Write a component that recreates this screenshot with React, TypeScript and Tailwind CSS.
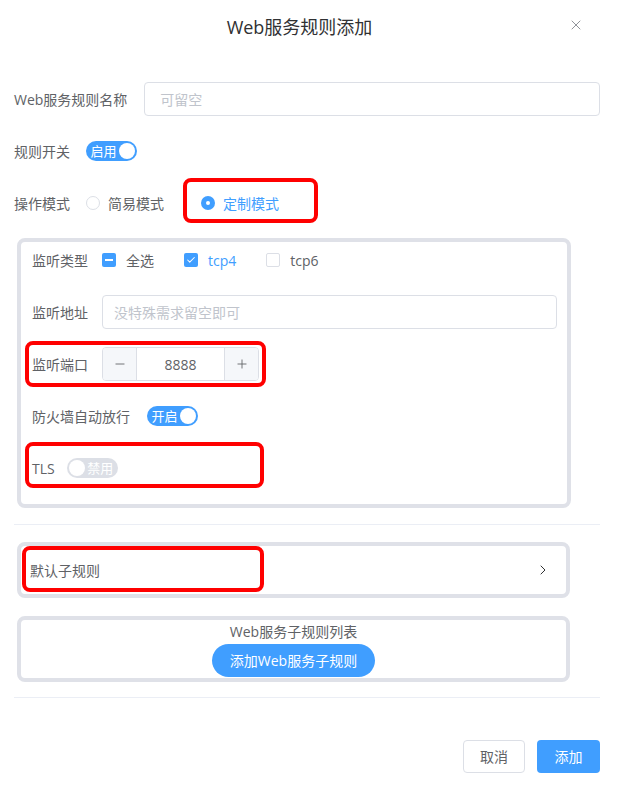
import { ChevronRight, X, Check, Minus, Plus } from 'lucide-react';

const label = 'mr-[14px] shrink-0 text-[14px] text-[#606266]';

function Switch({ on, text }: { on: boolean; text: string }) {
    return (
        <span
            className={`flex h-[20px] w-[51px] items-center rounded-full p-[2px] ${
                on ? 'bg-[#409eff]' : 'flex-row-reverse bg-[#dcdfe6]'
            }`}
        >
            <span className="flex-1 text-center text-[13px] leading-none text-white">{text}</span>
            <span className="h-[16px] w-[16px] rounded-full bg-white" />
        </span>
    );
}

function Radio({ checked, text }: { checked: boolean; text: string }) {
    return (
        <span className="flex items-center gap-[8px]">
            {checked ? (
                <span className="flex h-[14px] w-[14px] items-center justify-center rounded-full bg-[#409eff]">
                    <span className="h-[4px] w-[4px] rounded-full bg-white" />
                </span>
            ) : (
                <span className="h-[14px] w-[14px] rounded-full border border-[#dcdfe6] bg-white" />
            )}
            <span className={`text-[14px] ${checked ? 'text-[#409eff]' : 'text-[#606266]'}`}>{text}</span>
        </span>
    );
}

function CheckBox({ state, text }: { state: 'on' | 'half' | 'off'; text: string }) {
    return (
        <span className="mr-[30px] flex items-center gap-[10px]">
            {state === 'off' ? (
                <span className="h-[14px] w-[14px] rounded-[2px] border border-[#dcdfe6] bg-white" />
            ) : (
                <span className="flex h-[14px] w-[14px] items-center justify-center rounded-[2px] bg-[#409eff]">
                    {state === 'on' ? (
                        <Check size={10} strokeWidth={2.5} color="#fff" />
                    ) : (
                        <span className="h-[2px] w-[8px] bg-white" />
                    )}
                </span>
            )}
            <span className={`text-[14px] ${state === 'on' ? 'text-[#409eff]' : 'text-[#606266]'}`}>{text}</span>
        </span>
    );
}

function Annot({ cls }: { cls: string }) {
    return <div className={`pointer-events-none absolute rounded-[8px] border-[4px] border-[#ff0000] ${cls}`} />;
}

export default function App() {
    return (
        <div className="relative h-[785px] w-[619px] overflow-hidden bg-white pl-[14px] pr-[19px] font-['Open_Sans','Noto_Sans_CJK_SC',sans-serif]">
            <header className="relative -ml-[14px] -mr-[19px] flex h-[54px] items-center justify-center pr-[20px]">
                <h1 className="text-[18px] text-[#303133]">Web服务规则添加</h1>
                <X size={16} strokeWidth={1.5} color="#909399" className="absolute right-[35px] top-[17px]" />
            </header>

            <div className="mt-[28px] flex h-[34px] items-center">
                <span className="mr-[17px] shrink-0 text-[14px] text-[#606266]">Web服务规则名称</span>
                <div className="flex h-[34px] flex-1 items-center rounded-[4px] border border-[#dcdfe6] px-[15px] text-[14px] text-[#c0c4cc]">
                    可留空
                </div>
            </div>

            <div className="mt-[18px] flex h-[34px] items-center">
                <span className="mr-[16px] shrink-0 text-[14px] text-[#606266]">规则开关</span>
                <Switch on text="启用" />
            </div>

            <div className="mt-[18px] flex h-[34px] items-center">
                <span className="mr-[16px] shrink-0 text-[14px] text-[#606266]">操作模式</span>
                <div className="flex items-center gap-[37px]">
                    <Radio checked={false} text="简易模式" />
                    <Radio checked text="定制模式" />
                </div>
            </div>

            <section className="ml-[3px] mt-[18px] w-[554px] rounded-[8px] border-[4px] border-[#dfe1e8] pb-[19px] pl-[11px] pr-[10px] pt-[1px]">
                <div className="flex flex-col gap-[18px]">
                    <div className="flex h-[34px] items-center">
                        <span className={label}>监听类型</span>
                        <CheckBox state="half" text="全选" />
                        <CheckBox state="on" text="tcp4" />
                        <CheckBox state="off" text="tcp6" />
                    </div>
                    <div className="flex h-[34px] items-center">
                        <span className={label}>监听地址</span>
                        <div className="flex h-[34px] flex-1 items-center rounded-[4px] border border-[#dcdfe6] px-[11px] text-[14px] text-[#c0c4cc]">
                            没特殊需求留空即可
                        </div>
                    </div>
                    <div className="flex h-[34px] items-center">
                        <span className={label}>监听端口</span>
                        <div className="flex h-[34px] w-[157px] overflow-hidden rounded-[4px] border border-[#dcdfe6]">
                            <span className="flex w-[34px] items-center justify-center border-r border-[#dcdfe6] bg-[#f5f7fa]">
                                <Minus size={14} strokeWidth={1.5} color="#606266" />
                            </span>
                            <span className="flex flex-1 items-center justify-center text-[14px] text-[#606266]">8888</span>
                            <span className="flex w-[34px] items-center justify-center border-l border-[#dcdfe6] bg-[#f5f7fa]">
                                <Plus size={14} strokeWidth={1.5} color="#606266" />
                            </span>
                        </div>
                    </div>
                    <div className="flex h-[34px] items-center">
                        <span className="mr-[17px] shrink-0 text-[14px] text-[#606266]">防火墙自动放行</span>
                        <Switch on text="开启" />
                    </div>
                    <div className="flex h-[34px] items-center">
                        <span className="mr-[12px] shrink-0 text-[14px] text-[#606266]">TLS</span>
                        <Switch on={false} text="禁用" />
                    </div>
                </div>
            </section>

            <div className="mt-[16px] h-px bg-[#ebeef5]" />

            <section className="ml-[3px] mt-[17px] flex h-[56px] w-[553px] items-center justify-between rounded-[8px] border-[4px] border-[#dfe1e8] pl-[9px] pr-[15px]">
                <span className="text-[14px] text-[#606266]">默认子规则</span>
                <ChevronRight size={16} strokeWidth={1.5} color="#303133" />
            </section>

            <section className="ml-[3px] mt-[18px] flex h-[66px] w-[553px] flex-col items-center rounded-[8px] border-[4px] border-[#dfe1e8] pt-[2px]">
                <span className="text-[14px] leading-[20px] text-[#606266]">Web服务子规则列表</span>
                <button
                    type="button"
                    className="mt-[2px] h-[33px] rounded-full bg-[#409eff] px-[18px] text-[14px] text-white"
                >
                    添加Web服务子规则
                </button>
            </section>

            <div className="mt-[15px] h-px bg-[#ebeef5]" />

            <footer className="mt-[42px] flex justify-end gap-[12px]">
                <button
                    type="button"
                    className="h-[33px] w-[62px] rounded-[4px] border border-[#dcdfe6] bg-white text-[14px] text-[#606266]"
                >
                    取消
                </button>
                <button type="button" className="h-[33px] w-[63px] rounded-[4px] bg-[#409eff] text-[14px] text-white">
                    添加
                </button>
            </footer>

            <Annot cls="left-[183px] top-[178px] h-[45px] w-[135px]" />
            <Annot cls="left-[25px] top-[341px] h-[46px] w-[241px]" />
            <Annot cls="left-[25px] top-[442px] h-[46px] w-[239px]" />
            <Annot cls="left-[22px] top-[546px] h-[46px] w-[242px]" />
        </div>
    );
}
